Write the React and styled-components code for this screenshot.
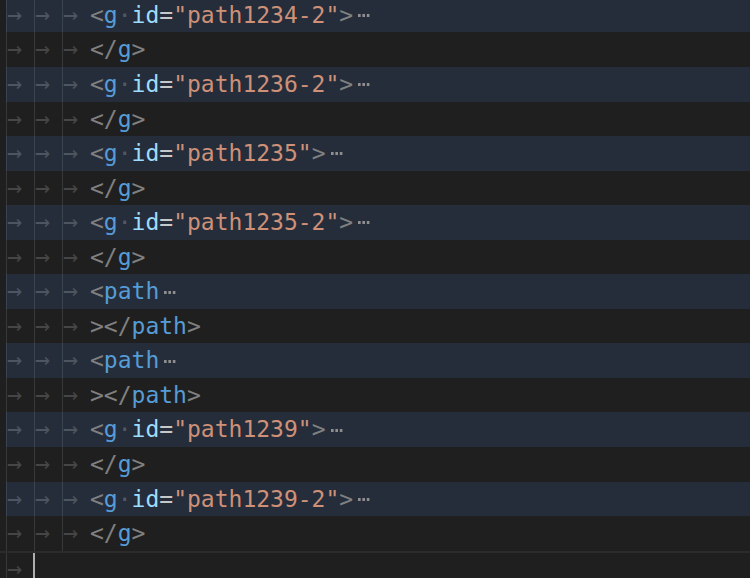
import React from 'react';
import styled, { createGlobalStyle } from 'styled-components';

const GlobalStyle = createGlobalStyle`
  html, body {
    margin: 0;
    padding: 0;
    background: #1f1f1f;
    overflow: hidden;
  }
`;

const Editor = styled.div`
  width: 750px;
  height: 578px;
  overflow: hidden;
  background: #1f1f1f;
  font-family: "DejaVu Sans Mono", "Liberation Mono", monospace;
  font-size: 23px;
  color: #cccccc;
`;

const Lines = styled.div`
  display: flex;
  flex-direction: column;
  margin-top: -2.1px;
`;

const Row = styled.div`
  display: flex;
  align-items: stretch;
  height: 34.56px;
  line-height: 34.56px;
  box-sizing: border-box;
  padding-left: 6px;
  white-space: pre;
  background-clip: content-box;
  background-color: ${p => (p.hl ? '#252d3b' : 'transparent')};
  border-top: ${p => (p.current ? '2px solid #2b2b2b' : 'none')};
`;

const Indent = styled.span`
  flex: none;
  width: 28px;
  box-sizing: border-box;
  border-left: 1px solid ${p => (p.hl ? '#3a4350' : '#383838')};
  color: ${p => (p.hl ? '#4d5560' : '#464646')};
  font-size: 25px;
  line-height: ${p => (p.current ? '31px' : '34px')};
`;

const Code = styled.span`
  display: inline-flex;
  align-items: center;
`;

const Punct = styled.span`
  color: #808080;
`;

const Tag = styled.span`
  color: #569cd6;
`;

const Attr = styled.span`
  color: #9cdcfe;
`;

const Eq = styled.span`
  color: #c8c8c8;
`;

const Str = styled.span`
  color: #ce9178;
`;

const Space = styled.span`
  color: #505a66;
`;

const Fold = styled.span`
  display: inline-block;
  width: 12px;
  height: 3px;
  margin-left: 5px;
  margin-top: 1px;
  background: linear-gradient(to right, #8e8e8e 70%, transparent 70%) 0 0 / 4.4px 3px repeat-x;
`;

const Cursor = styled.span`
  display: block;
  width: 2px;
  margin-left: -1px;
  background: #aeafad;
`;

const Tabs = ({ n, hl, current }) =>
  Array.from({ length: n }).map((_, i) => (
    <Indent key={i} hl={hl} current={current}>→</Indent>
  ));

const OpenG = ({ id }) => (
  <Code>
    <Punct>&lt;</Punct>
    <Tag>g</Tag>
    <Space>·</Space>
    <Attr>id</Attr>
    <Eq>=</Eq>
    <Str>"{id}"</Str>
    <Punct>&gt;</Punct>
    <Fold />
  </Code>
);

const CloseG = () => (
  <Code>
    <Punct>&lt;/</Punct>
    <Tag>g</Tag>
    <Punct>&gt;</Punct>
  </Code>
);

const OpenPath = () => (
  <Code>
    <Punct>&lt;</Punct>
    <Tag>path</Tag>
    <Fold />
  </Code>
);

const ClosePath = () => (
  <Code>
    <Punct>&gt;&lt;/</Punct>
    <Tag>path</Tag>
    <Punct>&gt;</Punct>
  </Code>
);

const lines = [
  { kind: 'g', id: 'path1234-2' },
  { kind: 'endg' },
  { kind: 'g', id: 'path1236-2' },
  { kind: 'endg' },
  { kind: 'g', id: 'path1235' },
  { kind: 'endg' },
  { kind: 'g', id: 'path1235-2' },
  { kind: 'endg' },
  { kind: 'path' },
  { kind: 'endpath' },
  { kind: 'path' },
  { kind: 'endpath' },
  { kind: 'g', id: 'path1239' },
  { kind: 'endg' },
  { kind: 'g', id: 'path1239-2' },
  { kind: 'endg' },
];

const renderCode = line => {
  switch (line.kind) {
    case 'g':
      return <OpenG id={line.id} />;
    case 'endg':
      return <CloseG />;
    case 'path':
      return <OpenPath />;
    default:
      return <ClosePath />;
  }
};

export default function App() {
  return (
    <>
      <GlobalStyle />
      <Editor>
        <Lines>
          {lines.map((line, i) => {
            const hl = i % 2 === 0;
            return (
              <Row key={i} hl={hl}>
                <Tabs n={3} hl={hl} />
                {renderCode(line)}
              </Row>
            );
          })}
          <Row current>
            <Tabs n={1} current />
            <Cursor />
          </Row>
        </Lines>
      </Editor>
    </>
  );
}
